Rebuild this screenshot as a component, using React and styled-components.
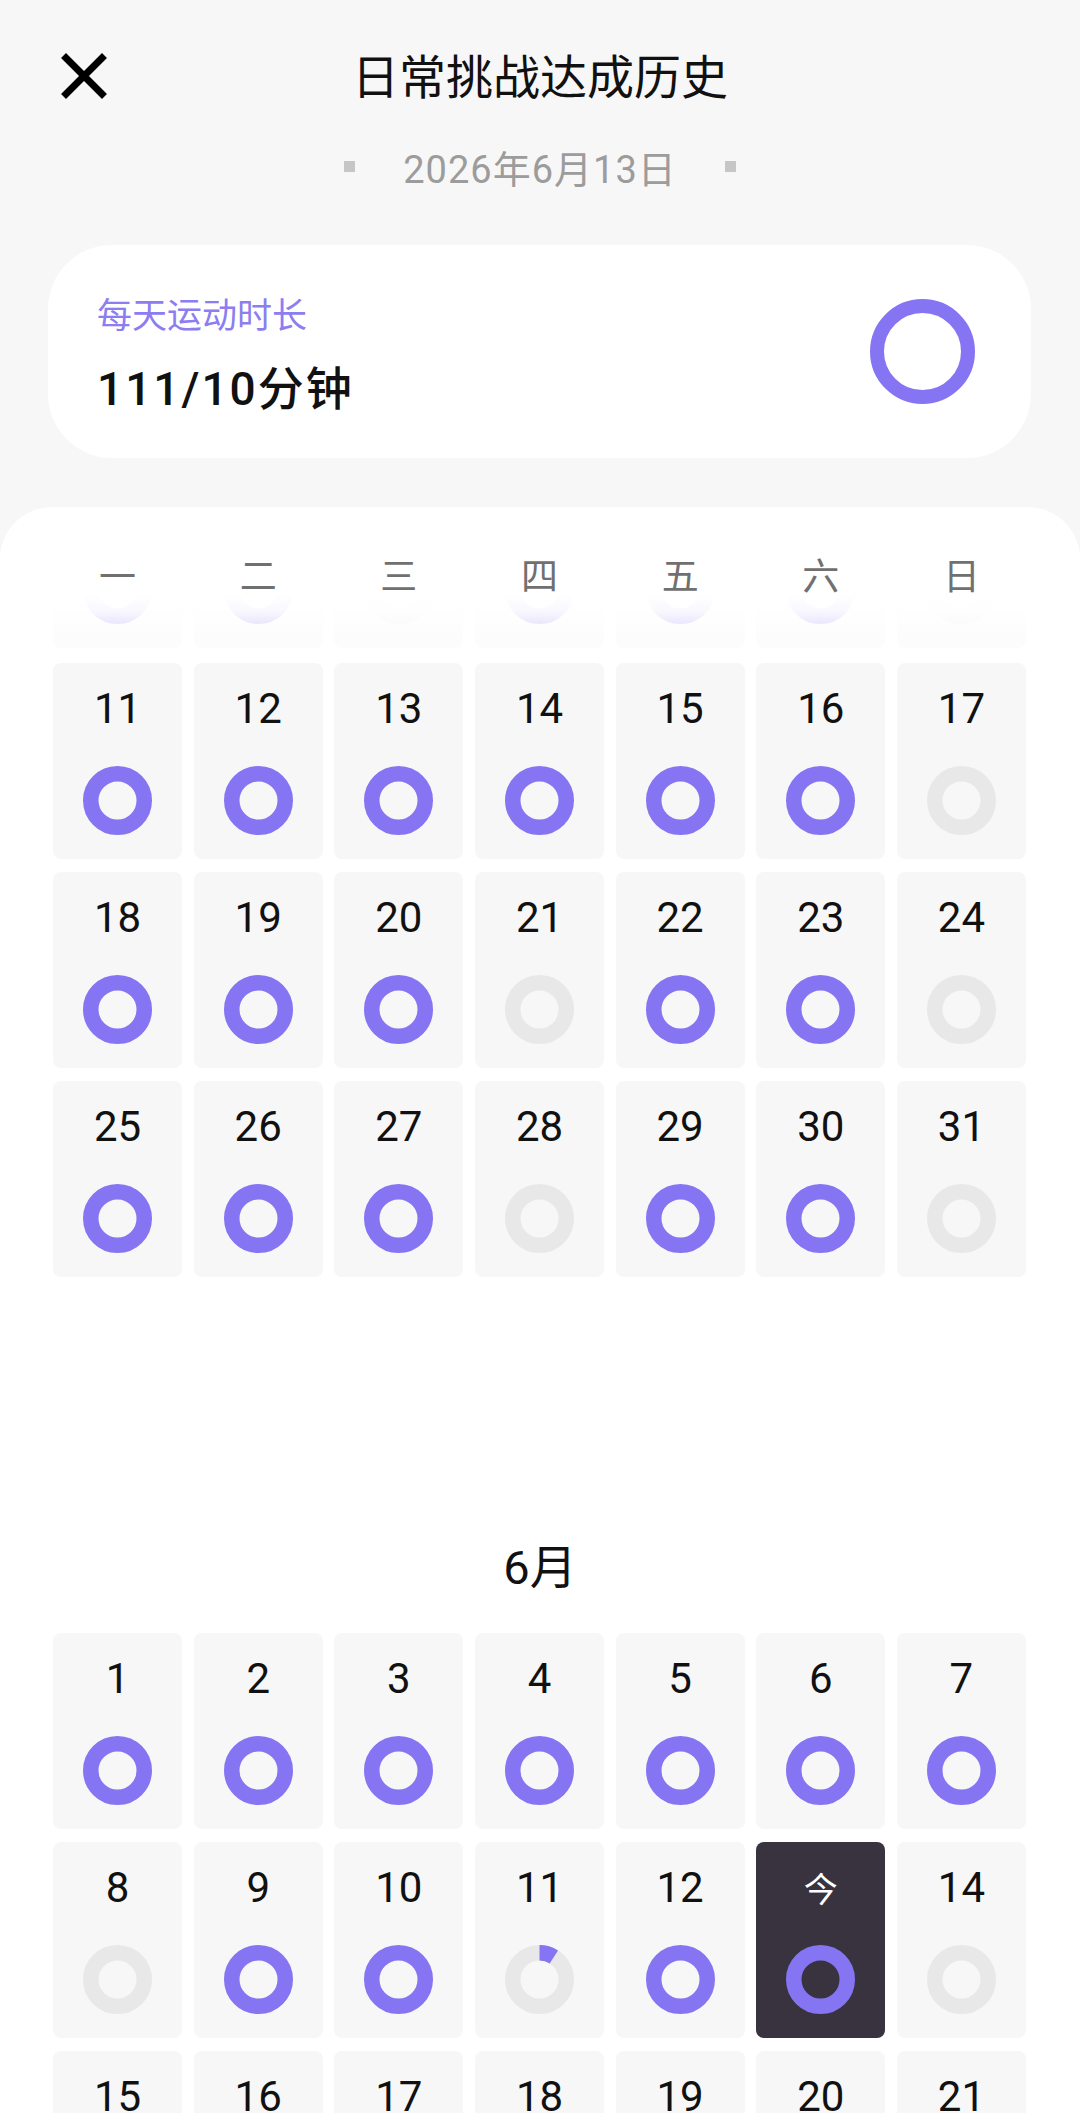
import React from "react";
import styled, { createGlobalStyle } from "styled-components";

const GlobalStyle = createGlobalStyle`
  html, body {
    margin: 0;
    padding: 0;
    background: #f7f7f7;
  }
  body {
    font-family: Roboto, "Noto Sans CJK SC", sans-serif;
    -webkit-font-smoothing: antialiased;
  }
`;

const PURPLE = "#8575f2";
const GRAY_RING = "#e8e8e8";

const Page = styled.div`
  width: 1080px;
  height: 2113px;
  background: #f7f7f7;
  overflow: hidden;
`;

const TopBar = styled.div`
  position: relative;
  height: 110px;
  padding-top: 38px;
  box-sizing: border-box;
  display: flex;
  align-items: center;
  justify-content: center;
`;

const CloseBtn = styled.button`
  position: absolute;
  left: 58px;
  top: 50px;
  width: 52px;
  height: 52px;
  padding: 0;
  border: none;
  background: none;
  display: flex;
  align-items: center;
  justify-content: center;
`;

const Title = styled.h1`
  margin: 0;
  font-size: 47px;
  font-weight: 400;
  color: #111;
  line-height: 60px;
  font-family: "Noto Sans CJK SC", sans-serif;
`;

const DateRow = styled.div`
  display: flex;
  align-items: center;
  justify-content: center;
  gap: 48px;
  margin-top: 32px;
  height: 48px;
`;

const Dot = styled.span`
  width: 11px;
  height: 11px;
  background: #c6c6c6;
`;

const DateText = styled.span`
  font-size: 38px;
  color: #9c9c9c;
  letter-spacing: 1px;
`;

const GoalCard = styled.div`
  margin: 55px 49px 0 48px;
  height: 213px;
  background: #fff;
  border-radius: 64px;
  display: flex;
  align-items: center;
  justify-content: space-between;
  padding: 0 56px 0 49px;
  box-sizing: border-box;
`;

const GoalInfo = styled.div`
  display: flex;
  flex-direction: column;
  gap: 22px;
`;

const GoalLabel = styled.div`
  font-size: 35px;
  color: #8c7df0;
  line-height: 52px;
  font-family: "Noto Sans CJK SC", sans-serif;
`;

const GoalValue = styled.div`
  font-size: 46px;
  font-weight: 500;
  color: #111;
  line-height: 56px;
  letter-spacing: 2px;
`;

const Panel = styled.div`
  margin-top: 49px;
  background: #fff;
  border-radius: 52px 52px 0 0;
  padding-bottom: 40px;
`;

const WeekHeader = styled.div`
  display: grid;
  grid-template-columns: repeat(7, 1fr);
  column-gap: 11.5px;
  padding: 46px 54px 0 53px;
`;

const WeekDay = styled.div`
  text-align: center;
  font-size: 37px;
  line-height: 42px;
  color: #707070;
  font-family: "Noto Sans CJK SC", sans-serif;
`;

const Peek = styled.div`
  position: relative;
  height: 53px;
  overflow: hidden;
  display: flex;
  flex-direction: column;
  justify-content: flex-end;
`;

const Fade = styled.div`
  position: absolute;
  inset: 0;
  background: linear-gradient(
    #fff 0%,
    rgba(255, 255, 255, 0.95) 30%,
    rgba(255, 255, 255, 0.75) 70%,
    rgba(255, 255, 255, 0.6) 100%
  );
`;

const Grid = styled.div`
  display: grid;
  grid-template-columns: repeat(7, 1fr);
  column-gap: 11.5px;
  row-gap: 13px;
  padding: 0 54px 0 53px;
  margin-top: ${(p) => p.$top || 0}px;
  flex-shrink: 0;
`;

const Cell = styled.div`
  height: 196px;
  border-radius: 8px;
  background: ${(p) => (p.$today ? "#38333f" : "#f7f7f7")};
  display: flex;
  flex-direction: column;
  align-items: center;
  padding-top: 22px;
  box-sizing: border-box;
`;

const DayNum = styled.div`
  height: 48px;
  line-height: 48px;
  font-size: ${(p) => (p.$today ? 34 : 42)}px;
  color: ${(p) => (p.$today ? "#fff" : "#111")};
  font-family: ${(p) =>
    p.$today ? '"Noto Sans CJK SC", sans-serif' : 'Roboto, "Noto Sans CJK SC", sans-serif'};
`;

const RingWrap = styled.div`
  margin-top: 33px;
  width: 69px;
  height: 69px;
`;

const MonthTitle = styled.div`
  margin-top: 261px;
  margin-bottom: 35px;
  text-align: center;
  font-size: 47px;
  line-height: 60px;
  color: #111;
`;

const Ring = ({ size, stroke, progress, track }) => {
  const r = (size - stroke) / 2;
  const c = 2 * Math.PI * r;
  const full = progress >= 1;
  return (
    <svg width={size} height={size} viewBox={`0 0 ${size} ${size}`}>
      <circle
        cx={size / 2}
        cy={size / 2}
        r={r}
        fill="none"
        stroke={full ? PURPLE : track}
        strokeWidth={stroke}
      />
      {!full && progress > 0 && (
        <circle
          cx={size / 2}
          cy={size / 2}
          r={r}
          fill="none"
          stroke={PURPLE}
          strokeWidth={stroke}
          strokeDasharray={`${c * progress} ${c}`}
          transform={`rotate(-90 ${size / 2} ${size / 2})`}
        />
      )}
    </svg>
  );
};

const DayCell = ({ day, hideNum }) => (
  <Cell $today={day.today}>
    <DayNum $today={day.today}>
      {hideNum ? "" : day.today ? "今" : day.n}
    </DayNum>
    <RingWrap>
      <Ring size={69} stroke={15.5} progress={day.p} track={GRAY_RING} />
    </RingWrap>
  </Cell>
);

const mk = (start, statuses) =>
  statuses.map((p, i) => ({ n: start + i, p }));

const weekdays = ["一", "二", "三", "四", "五", "六", "日"];

const mayPeek = mk(4, [1, 1, 0, 1, 1, 1, 0]);
const mayRows = [
  ...mk(11, [1, 1, 1, 1, 1, 1, 0]),
  ...mk(18, [1, 1, 1, 0, 1, 1, 0]),
  ...mk(25, [1, 1, 1, 0, 1, 1, 0]),
];
const juneRows = [
  ...mk(1, [1, 1, 1, 1, 1, 1, 1]),
  ...mk(8, [0, 1, 1, 0.09, 1, 1, 0]),
  ...mk(15, [0, 0, 0, 0, 0, 0, 0]),
];
juneRows[12] = { n: 13, p: 1, today: true };

export default function App() {
  return (
    <Page>
      <GlobalStyle />
      <TopBar>
        <CloseBtn aria-label="关闭">
          <svg width="46" height="46" viewBox="0 0 46 46">
            <path
              d="M5 5 L41 41 M41 5 L5 41"
              stroke="#000"
              strokeWidth="7"
              strokeLinecap="square"
            />
          </svg>
        </CloseBtn>
        <Title>日常挑战达成历史</Title>
      </TopBar>

      <DateRow>
        <Dot />
        <DateText>2026年6月13日</DateText>
        <Dot />
      </DateRow>

      <GoalCard>
        <GoalInfo>
          <GoalLabel>每天运动时长</GoalLabel>
          <GoalValue>111/10分钟</GoalValue>
        </GoalInfo>
        <Ring size={105} stroke={14} progress={1} track={GRAY_RING} />
      </GoalCard>

      <Panel>
        <WeekHeader>
          {weekdays.map((w) => (
            <WeekDay key={w}>{w}</WeekDay>
          ))}
        </WeekHeader>
        <Peek>
          <Grid>
            {mayPeek.map((d) => (
              <DayCell key={d.n} day={d} hideNum />
            ))}
          </Grid>
          <Fade />
        </Peek>
        <Grid $top={15}>
          {mayRows.map((d) => (
            <DayCell key={d.n} day={d} />
          ))}
        </Grid>

        <MonthTitle>6月</MonthTitle>
        <Grid>
          {juneRows.map((d) => (
            <DayCell key={d.n} day={d} />
          ))}
        </Grid>
      </Panel>
    </Page>
  );
}
